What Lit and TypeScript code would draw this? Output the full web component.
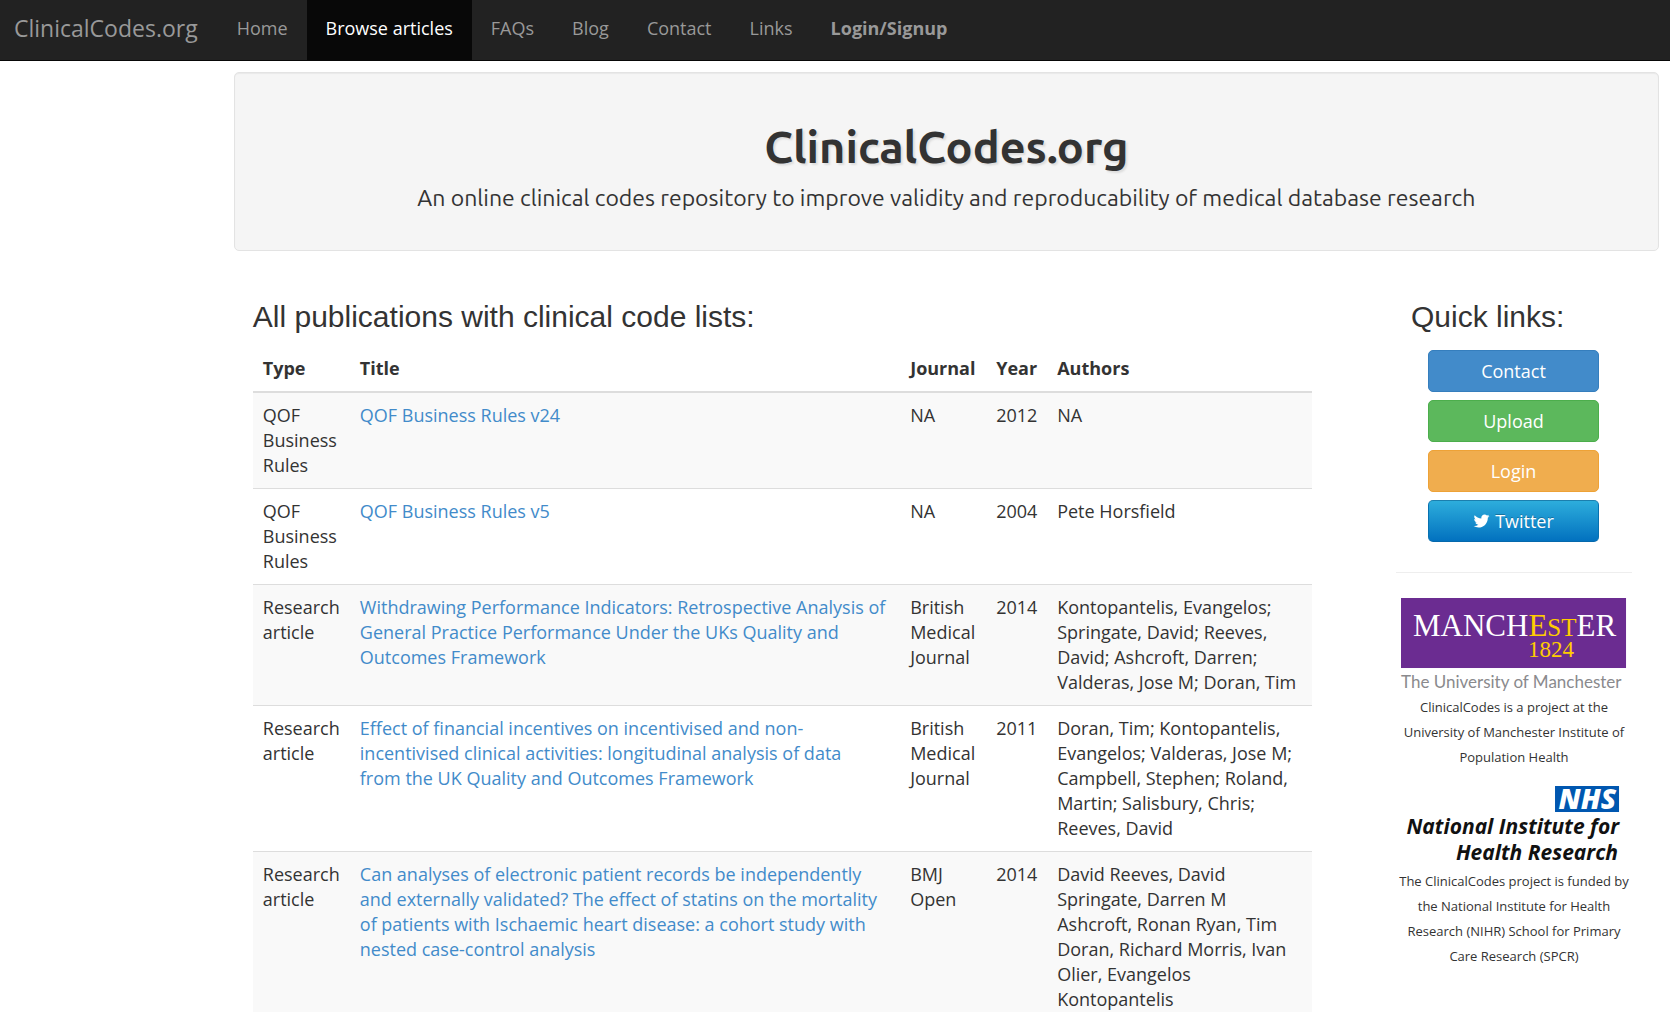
import { LitElement, html, css, svg } from "lit";
import { customElement } from "lit/decorators.js";
import { classMap } from "lit/directives/class-map.js";

interface Publication {
  type: string;
  title: string;
  journal: string;
  year: number;
  authors: string;
}

const NAV = [
  { label: "Home" },
  { label: "Browse articles", active: true },
  { label: "FAQs" },
  { label: "Blog" },
  { label: "Contact" },
  { label: "Links" },
  { label: "Login/Signup", strong: true },
];

const PUBLICATIONS: Publication[] = [
  { type: "QOF Business Rules", title: "QOF Business Rules v24", journal: "NA", year: 2012, authors: "NA" },
  { type: "QOF Business Rules", title: "QOF Business Rules v5", journal: "NA", year: 2004, authors: "Pete Horsfield" },
  {
    type: "Research article",
    title:
      "Withdrawing Performance Indicators: Retrospective Analysis of General Practice Performance Under the UKs Quality and Outcomes Framework",
    journal: "British Medical Journal",
    year: 2014,
    authors:
      "Kontopantelis, Evangelos; Springate, David; Reeves, David; Ashcroft, Darren; Valderas, Jose M; Doran, Tim",
  },
  {
    type: "Research article",
    title:
      "Effect of financial incentives on incentivised and non-incentivised clinical activities: longitudinal analysis of data from\u00a0the UK Quality and Outcomes Framework",
    journal: "British Medical Journal",
    year: 2011,
    authors:
      "Doran, Tim; Kontopantelis, Evangelos; Valderas, Jose M; Campbell, Stephen; Roland, Martin; Salisbury, Chris; Reeves, David",
  },
  {
    type: "Research article",
    title:
      "Can analyses of electronic patient records be independently and externally validated? The effect of statins on the mortality of patients with Ischaemic heart disease: a cohort study with nested case-control analysis",
    journal: "BMJ Open",
    year: 2014,
    authors:
      "David Reeves, David Springate, Darren M Ashcroft, Ronan Ryan, Tim Doran, Richard Morris, Ivan Olier, Evangelos Kontopantelis",
  },
];

@customElement("site-nav")
class SiteNav extends LitElement {
  static styles = css`
    :host {
      display: block;
      background: #222;
      border-bottom: 1px solid #080808;
    }
    .bar {
      display: flex;
      padding-left: 14px;
    }
    .brand,
    .item {
      color: #999;
      text-decoration: none;
      line-height: 20px;
      padding: 18px 19px 22px;
    }
    .brand {
      font-size: 23px;
      padding: 18px 20px 22px 0;
    }
    .menu {
      display: flex;
      list-style: none;
      margin: 0;
      padding: 0;
    }
    .item {
      display: block;
    }
    .active {
      background: #080808;
      color: #fff;
    }
    .strong {
      font-weight: 700;
    }
  `;

  render() {
    return html`<nav class="bar">
      <a class="brand" href="#">ClinicalCodes.org</a>
      <ul class="menu">
        ${NAV.map(
          (n) => html`<li>
            <a class=${classMap({ item: true, active: !!n.active, strong: !!n.strong })} href="#">${n.label}</a>
          </li>`
        )}
      </ul>
    </nav>`;
  }
}

@customElement("publication-table")
class PublicationTable extends LitElement {
  static styles = css`
    :host {
      display: block;
    }
    .table {
      width: 100%;
      table-layout: fixed;
      border-collapse: separate;
      border-spacing: 0;
    }
    .type {
      width: 97px;
    }
    .journal {
      width: 86px;
    }
    .year {
      width: 61px;
    }
    .authors {
      width: 25%;
    }
    th,
    td {
      box-sizing: border-box;
      padding: 10px;
      text-align: left;
      vertical-align: top;
      border-bottom: 1px solid #ddd;
    }
    th {
      border-bottom-width: 2px;
      font-weight: 700;
    }
    tbody tr:nth-child(odd) {
      background: #f9f9f9;
    }
    a {
      color: #428bca;
      text-decoration: none;
    }
  `;

  render() {
    return html`<table class="table">
      <thead>
        <tr>
          <th class="type">Type</th>
          <th>Title</th>
          <th class="journal">Journal</th>
          <th class="year">Year</th>
          <th class="authors">Authors</th>
        </tr>
      </thead>
      <tbody>
        ${PUBLICATIONS.map(
          (p) => html`<tr>
            <td>${p.type}</td>
            <td><a href="#">${p.title}</a></td>
            <td>${p.journal}</td>
            <td>${p.year}</td>
            <td>${p.authors}</td>
          </tr>`
        )}
      </tbody>
    </table>`;
  }
}

const twitterIcon = svg`<path fill="currentColor" d="M1620 408q-67 98-162 167 1 14 1 42 0 130-38 259.5t-115.5 248.5-184.5 210.5-258 146-323 54.5q-271 0-496-145 35 4 78 4 225 0 401-138-105-2-188-64.5t-114-159.5q33 5 61 5 43 0 85-11-112-23-185.5-111.5t-73.5-205.5v-4q68 38 146 41-66-44-105-115t-39-154q0-88 44-163 121 149 294.5 238.5t371.5 99.5q-8-38-8-74 0-134 94.5-228.5t228.5-94.5q140 0 236 102 109-21 205-78-37 115-142 178 93-10 186-50z"/>`;

@customElement("quick-links")
class QuickLinks extends LitElement {
  static styles = css`
    :host {
      display: block;
    }
    .heading {
      margin: 0 15px 17px;
      font: 400 30px/33px "Liberation Sans", Arial, sans-serif;
    }
    .buttons {
      display: grid;
      gap: 8px;
      margin: 0 33px 30px 32px;
    }
    .btn {
      box-sizing: border-box;
      height: 42px;
      border: 1px solid;
      border-radius: 5px;
      padding: 0;
      color: #fff;
      font: inherit;
      line-height: 25px;
      display: flex;
      align-items: center;
      justify-content: center;
      gap: 5px;
    }
    .contact {
      background: #428bca;
      border-color: #357ebd;
    }
    .upload {
      background: #5cb85c;
      border-color: #4cae4c;
    }
    .login {
      background: #f0ad4e;
      border-color: #eea236;
    }
    .twitter {
      background: linear-gradient(#2daddc, #0271bf);
      border-color: #1b7fae #0871b0 #0568ac;
      text-shadow: 0 -1px 0 rgba(0, 0, 0, 0.25);
    }
    .icon {
      width: 17px;
      height: 18px;
    }
    .rule {
      border: 0;
      border-top: 1px solid #eee;
      margin: 0 0 25px;
    }
    .logo {
      display: block;
      margin: 0 5px;
      overflow: visible;
    }
    .note {
      margin: 0 0 16px;
      font-size: 13px;
      line-height: 25px;
      text-align: center;
    }
    .open {
      font-family: "Open Sans", sans-serif;
    }
    .serif {
      font-family: "Liberation Serif", serif;
    }
    .lato {
      font-family: Lato, sans-serif;
    }
    .bold-italic {
      font-weight: 700;
      font-style: italic;
    }
    .heavy {
      font-weight: 800;
    }
  `;

  render() {
    return html`
      <h3 class="heading">Quick links:</h3>
      <div class="buttons">
        <button class="btn contact">Contact</button>
        <button class="btn upload">Upload</button>
        <button class="btn login">Login</button>
        <button class="btn twitter">
          <svg class="icon" viewBox="0 0 1664 1792" aria-hidden="true">${twitterIcon}</svg>Twitter
        </button>
      </div>
      <hr class="rule" />
      <div>
        <svg class="logo" viewBox="0 0 226 97" role="img" aria-label="The University of Manchester">
          <rect width="225" height="70" fill="#6b2c91" />
          <g class="serif" fill="#fff" font-size="31">
            <text x="12" y="38">MANCH<tspan fill="#fc0">E<tspan font-size="25">ST</tspan></tspan>ER</text>
            <text x="127" y="59" font-size="23" fill="#fc0">1824</text>
          </g>
          <text class="lato" x="0" y="90" font-size="17" fill="#8a8a8d">The University of Manchester</text>
        </svg>
        <p class="note">ClinicalCodes is a project at the University of Manchester Institute of Population Health</p>
        <svg class="logo" viewBox="0 0 226 83" role="img" aria-label="NHS National Institute for Health Research">
          <rect x="154" y="0" width="64" height="26" fill="#0057b0" />
          <g class="open bold-italic" text-anchor="end">
            <text class="heavy" x="215" y="23" font-size="28" fill="#fff">NHS</text>
            <g font-size="21" fill="#111">
              <text x="218" y="48">National Institute for</text>
              <text x="217" y="74">Health Research</text>
            </g>
          </g>
        </svg>
        <p class="note">
          The ClinicalCodes project is funded by the National Institute for Health Research (NIHR) School for Primary
          Care Research (SPCR)
        </p>
      </div>
    `;
  }
}

@customElement("app-root")
class AppRoot extends LitElement {
  static styles = css`
    :host {
      display: block;
      background: #fff;
      color: #333;
      font: 400 18px/25px "Open Sans", sans-serif;
    }
    .page {
      margin: 11px 11px 0 14%;
    }
    .well {
      background: #f5f5f5;
      border: 1px solid #e3e3e3;
      border-radius: 5px;
      box-shadow: inset 0 1px 1px rgba(0, 0, 0, 0.05);
      padding: 47px 24px 37px;
      text-align: center;
      font-family: Ubuntu, "Noto Sans", sans-serif;
    }
    .site {
      margin: 0;
      font-size: 45px;
      line-height: 54px;
      font-weight: 600;
      text-shadow: 2px 2px 2px #ddd;
    }
    .tagline {
      margin: 8px 0 0;
      font-size: 23px;
      line-height: 31px;
    }
    .content {
      display: grid;
      grid-template-columns: 1059fr 236fr;
      gap: 84px;
      padding: 49px 27px 0 19px;
    }
    .heading {
      margin: 0 0 13px;
      font: 400 30px/33px "Liberation Sans", Arial, sans-serif;
    }
  `;

  render() {
    return html`
      <site-nav></site-nav>
      <main class="page">
        <header class="well">
          <h1 class="site">ClinicalCodes.org</h1>
          <p class="tagline">
            An online clinical codes repository to improve validity and reproducability of medical database research
          </p>
        </header>
        <div class="content">
          <section>
            <h3 class="heading">All publications with clinical code lists:</h3>
            <publication-table></publication-table>
          </section>
          <aside>
            <quick-links></quick-links>
          </aside>
        </div>
      </main>
    `;
  }
}
